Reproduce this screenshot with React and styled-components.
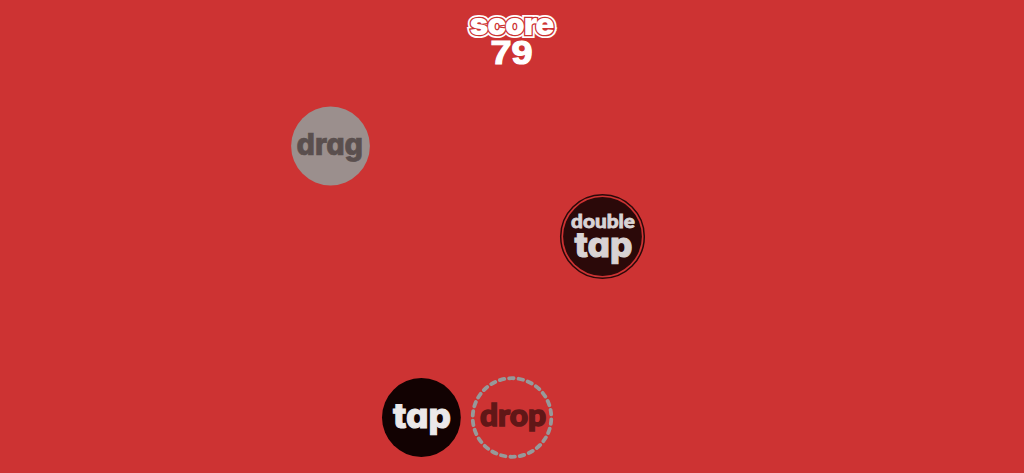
import React from "react"
import styled, { createGlobalStyle } from "styled-components"

const GlobalStyle = createGlobalStyle`
  body {
    margin: 0;
    background: #cd3333;
    overflow: hidden;
  }
`

const Game = styled.main`
  position: relative;
  height: 473px;
  background: #cd3333;
`

const Scoreboard = styled.header`
  display: flex;
  flex-direction: column;
  align-items: center;
  padding: 7px 1px 0 0;
`

// the copy behind the letters carries the outer white outline
const Title = styled.h1`
  position: relative;
  isolation: isolate;
  margin: 0;
  height: 32px;
  font: 900 31.5px/33px Inter, "Liberation Sans", sans-serif;
  letter-spacing: -1.1px;
  color: #fff;
  -webkit-text-stroke: 2.6px #cd3333;
  stroke-linejoin: round;
  paint-order: stroke fill;

  &::before {
    content: "${p => p.$label}";
    position: absolute;
    inset: 0;
    z-index: -1;
    -webkit-text-stroke: 6.2px #fff;
  }
`

const Points = styled.svg`
  width: 60px;
  height: 28px;
  overflow: visible;

  text {
    font-family: "Liberation Sans", Arial, sans-serif;
    font-weight: 700;
    font-size: 32.5px;
    fill: #fff;
    stroke: #fff;
    stroke-width: 1.2px;
  }
`

// tokens sit freely on the board, placed by their centre
const Token = styled.svg`
  position: absolute;
  left: ${p => p.$x - 50}px;
  top: ${p => p.$y - 50}px;
  width: 100px;
  height: 100px;
`

const Word = styled.text`
  font-family: ${p => (p.$round ? "Lato" : "Inter")}, "Liberation Sans", sans-serif;
  font-weight: ${p => (p.$round ? 900 : 800)};
  font-feature-settings: "cv11" 1;
  font-size: ${p => p.$size}px;
  fill: ${p => p.$color};
  stroke: ${p => p.$color};
  stroke-width: ${p => p.$bold || 0}px;
`

const fit = (x, y, width) => ({
  x,
  y,
  textLength: width,
  lengthAdjust: "spacingAndGlyphs",
})

const Score = ({ value }) => (
  <Scoreboard>
    <Title $label="score">score</Title>
    <Points viewBox="0 0 60 28">
      <text {...fit(8.5, 25, 42)}>{value}</text>
    </Points>
  </Scoreboard>
)

const App = () => (
  <>
    <GlobalStyle />
    <Game>
      <Score value={79} />
      <Token $x={330} $y={146} viewBox="0 0 100 100">
        <circle cx="50.5" cy="50" r="39.4" fill="#9b8f8d" />
        <Word {...fit(16.5, 58.6, 66.5)} $size={30} $color="#5a4f4e" $bold={0.7}>drag</Word>
      </Token>
      <Token $x={602} $y={236} viewBox="0 0 100 100">
        <circle cx="50.5" cy="50.5" r="41.8" fill="none" stroke="#2b0909" strokeWidth="1.5" />
        <circle cx="50.5" cy="50.5" r="39.4" fill="#2b0909" />
        <Word {...fit(19, 42.4, 64)} $size={19.3} $color="#d9d3d4" $round $bold={0.8}>double</Word>
        <Word {...fit(22.5, 71.2, 58)} $size={34} $color="#d9d3d4" $bold={1}>tap</Word>
      </Token>
      <Token $x={421} $y={417} viewBox="0 0 100 100">
        <circle cx="50.4" cy="50.5" r="39.4" fill="#120202" />
        <Word {...fit(22, 61.4, 58)} $size={34} $color="#ebe8e9" $bold={1}>tap</Word>
      </Token>
      <Token $x={512} $y={417} viewBox="0 0 100 100">
        <circle
          cx="50"
          cy="50.5"
          r="39.3"
          fill="none"
          stroke="#97999a"
          strokeWidth="3.8"
          strokeLinecap="round"
          pathLength="260"
          strokeDasharray="4.8 5.2"
          transform="rotate(-94.2 50 50.5)"
        />
        <Word {...fit(18, 59.4, 66)} $size={30} $color="#611717" $round $bold={1.5}>drop</Word>
      </Token>
    </Game>
  </>
)

export default App
